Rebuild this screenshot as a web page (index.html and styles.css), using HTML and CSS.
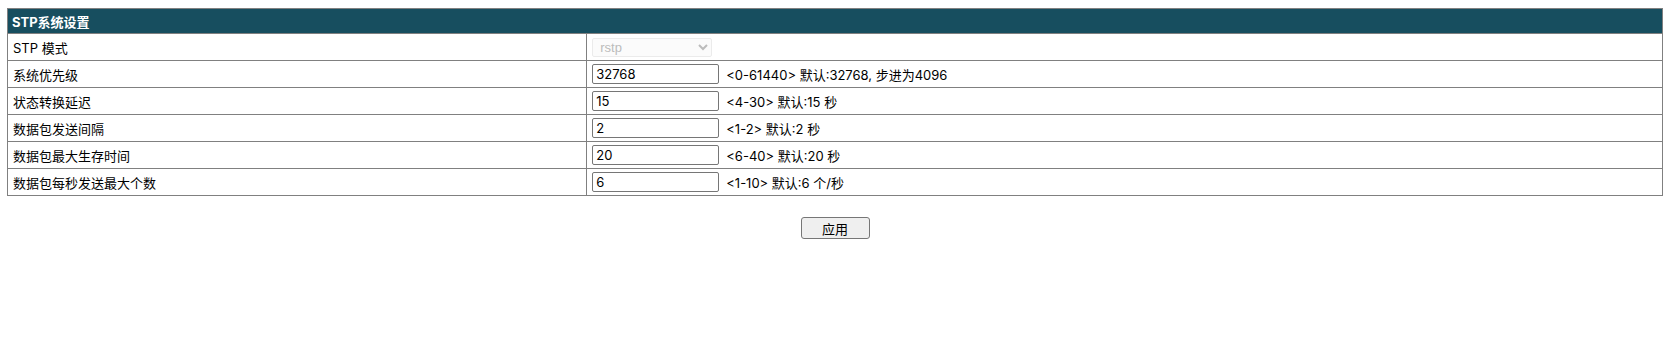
FILE: index.html
```html
<!DOCTYPE html>
<html lang="zh-CN">
<head>
<meta charset="utf-8">
<title>STP系统设置</title>
<link rel="stylesheet" href="styles.css">
</head>
<body>
<table class="cfg">
  <tr class="head"><th colspan="2">STP系统设置</th></tr>
  <tr>
    <td class="label">STP 模式</td>
    <td class="val"><select class="sel" disabled><option>rstp</option></select></td>
  </tr>
  <tr>
    <td class="label">系统优先级</td>
    <td class="val"><input class="txt" type="text" value="32768"><span class="hint">&lt;0-61440&gt; 默认:32768, 步进为4096</span></td>
  </tr>
  <tr>
    <td class="label">状态转换延迟</td>
    <td class="val"><input class="txt" type="text" value="15"><span class="hint">&lt;4-30&gt; 默认:15 秒</span></td>
  </tr>
  <tr>
    <td class="label">数据包发送间隔</td>
    <td class="val"><input class="txt" type="text" value="2"><span class="hint">&lt;1-2&gt; 默认:2 秒</span></td>
  </tr>
  <tr>
    <td class="label">数据包最大生存时间</td>
    <td class="val"><input class="txt" type="text" value="20"><span class="hint">&lt;6-40&gt; 默认:20 秒</span></td>
  </tr>
  <tr>
    <td class="label">数据包每秒发送最大个数</td>
    <td class="val"><input class="txt" type="text" value="6"><span class="hint">&lt;1-10&gt; 默认:6 个/秒</span></td>
  </tr>
</table>
<div class="actions"><button class="btn" type="button">应用</button></div>
</body>
</html>
```

FILE: styles.css
```css
html, body {
  background: #ffffff;
}
body {
  margin: 8px 4px 8px 7px;
  font-family: Inter, "Noto Sans CJK SC", sans-serif;
  font-size: 13px;
  color: #000000;
}
.cfg {
  width: 100%;
  border-collapse: collapse;
  border: 1px solid #808080;
}
.cfg th, .cfg td {
  border: 1px solid #808080;
  padding: 0 5px;
  text-align: left;
  vertical-align: middle;
}
.head th {
  background: #174e5f;
  color: #ffffff;
  font-weight: bold;
  height: 24px;
  padding-left: 4px;
}
.cfg td {
  height: 26px;
}
.label {
  width: 35%;
}
.val {
  padding-left: 4px;
}
.sel {
  width: 120px;
  height: 19px;
  margin: 0;
  padding: 0 0 0 3px;
  font-family: "Liberation Sans", sans-serif;
  font-size: 13px;
  color: #a0a0a0;
  background: #fafafa;
  border: 1px solid #e3e3e3;
  border-radius: 2px;
  vertical-align: middle;
}
.txt {
  box-sizing: border-box;
  width: 127px;
  height: 20px;
  margin: 0;
  padding: 0 3px;
  font-family: Inter, "Noto Sans CJK SC", sans-serif;
  font-size: 13px;
  color: #000;
  border: 1px solid #767676;
  border-radius: 2px;
  vertical-align: middle;
}
.hint {
  margin-left: 7px;
  vertical-align: middle;
}
.actions {
  display: flex;
  justify-content: center;
  padding-top: 21px;
}
.btn {
  box-sizing: border-box;
  width: 69px;
  height: 22px;
  padding: 0;
  font-family: Inter, "Noto Sans CJK SC", sans-serif;
  font-size: 13px;
  color: #000;
  background: #efefef;
  border: 1px solid #767676;
  border-radius: 3px;
}
```
